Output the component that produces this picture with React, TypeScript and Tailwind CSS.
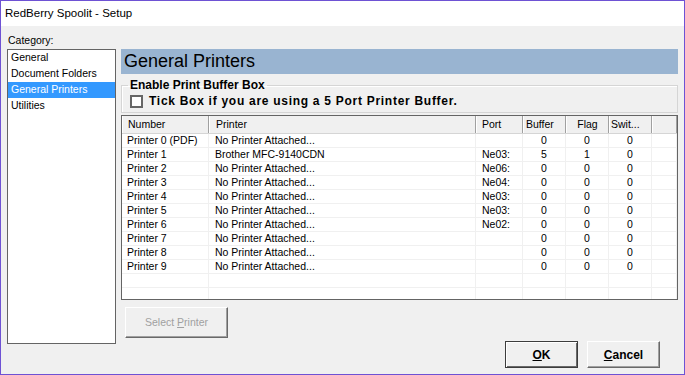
const printers = [
  { num: "Printer 0 (PDF)", name: "No Printer Attached...", port: "", buffer: "0", flag: "0", swit: "0" },
  { num: "Printer 1", name: "Brother MFC-9140CDN", port: "Ne03:", buffer: "5", flag: "1", swit: "0" },
  { num: "Printer 2", name: "No Printer Attached...", port: "Ne06:", buffer: "0", flag: "0", swit: "0" },
  { num: "Printer 3", name: "No Printer Attached...", port: "Ne04:", buffer: "0", flag: "0", swit: "0" },
  { num: "Printer 4", name: "No Printer Attached...", port: "Ne03:", buffer: "0", flag: "0", swit: "0" },
  { num: "Printer 5", name: "No Printer Attached...", port: "Ne03:", buffer: "0", flag: "0", swit: "0" },
  { num: "Printer 6", name: "No Printer Attached...", port: "Ne02:", buffer: "0", flag: "0", swit: "0" },
  { num: "Printer 7", name: "No Printer Attached...", port: "", buffer: "0", flag: "0", swit: "0" },
  { num: "Printer 8", name: "No Printer Attached...", port: "", buffer: "0", flag: "0", swit: "0" },
  { num: "Printer 9", name: "No Printer Attached...", port: "", buffer: "0", flag: "0", swit: "0" },
  { num: "", name: "", port: "", buffer: "", flag: "", swit: "" },
  { num: "", name: "", port: "", buffer: "", flag: "", swit: "" },
];

const categories = ["General", "Document Folders", "General Printers", "Utilities"];

const cols = "grid grid-cols-[87px_267px_47px_43px_43px_43px_1fr]";
const headCell = "h-full border-l border-l-white border-r border-r-[#a0a0a0] leading-[17px] whitespace-nowrap overflow-hidden";
const bodyCell = "h-full border-r border-r-[#f0f0f0] leading-[13px] whitespace-nowrap overflow-hidden";

function PrinterTable() {
  return (
    <div className="mt-[2px] h-[185px] w-full overflow-hidden border border-[#646464] bg-white">
      <div className={`${cols} h-[18px] border-b border-b-[#d5d5d5] bg-[#f0f0f0]`}>
        <div className={`${headCell} pl-[5px]`}>Number</div>
        <div className={`${headCell} pl-[6px]`}>Printer</div>
        <div className={`${headCell} pl-[5px]`}>Port</div>
        <div className={`${headCell} pl-[2px]`}>Buffer</div>
        <div className={`${headCell} text-center`}>Flag</div>
        <div className={`${headCell} pl-[1px]`}>Swit...</div>
        <div className={`${headCell}`}></div>
      </div>
      {printers.map((p, i) => (
        <div key={i} className={`${cols} h-[14px] border-b border-b-[#f0f0f0]`}>
          <div className={`${bodyCell} pl-[5px]`}>{p.num}</div>
          <div className={`${bodyCell} pl-[6px]`}>{p.name}</div>
          <div className={`${bodyCell} pl-[6px]`}>{p.port}</div>
          <div className={`${bodyCell} text-center`}>{p.buffer}</div>
          <div className={`${bodyCell} text-center`}>{p.flag}</div>
          <div className={`${bodyCell} text-center`}>{p.swit}</div>
          <div className={`${bodyCell}`}></div>
        </div>
      ))}
    </div>
  );
}

export default function App() {
  return (
    <div className="flex h-[375px] w-[685px] flex-col border border-[#6e52d4] bg-[#f0f0f0] font-['Liberation_Sans',Arial,sans-serif] text-[10.5px] text-black">
      {/* title bar */}
      <div className="flex h-[25px] shrink-0 items-center bg-white pl-[4px] text-[11.5px]">
        RedBerry Spoolit - Setup
      </div>

      <div className="flex flex-1">
        {/* category list */}
        <div className="ml-[6px] flex w-[109px] flex-col pt-[7px]">
          <div className="h-[14px] pl-[1px] leading-[14px]">Category:</div>
          <div className="mt-[2px] h-[295px] border border-[#646464] bg-white">
            {categories.map((c) => (
              <div
                key={c}
                className={`h-[16px] pl-[3px] leading-[15px] ${c === "General Printers" ? "bg-[#3399ff] text-white" : ""}`}
              >
                {c}
              </div>
            ))}
          </div>
        </div>

        {/* right panel */}
        <div className="ml-[5px] flex w-[557px] flex-col pt-[23px]">
          <div className="flex h-[25px] items-center bg-[#99b4d1] pl-[3px] text-[18px]">General Printers</div>

          <fieldset className="mt-[4px] border border-[#d5d5d5] pb-[4px] shadow-[inset_1px_1px_0_#fff]">
            <legend className="ml-[6px] px-[2px] text-[12px] font-bold leading-[14px]">Enable Print Buffer Box</legend>
            <div className="mt-[3px] flex items-center pl-[8px]">
              <div className="h-[13px] w-[13px] border-2 border-[#666] bg-white"></div>
              <span className="ml-[6px] text-[12px] font-bold leading-[13px] tracking-[0.72px]">
                Tick Box if you are using a 5 Port Printer Buffer.
              </span>
            </div>
          </fieldset>

          <PrinterTable />

          <div className="mt-[7px] pl-[4px]">
            <button className="h-[31px] w-[103px] border border-t-white border-l-white border-b-[#696969] border-r-[#696969] bg-[#f0f0f0] text-[10.5px] text-[#a0a0a0] shadow-[inset_-1px_-1px_0_#a0a0a0]">
              Select <span className="underline">P</span>rinter
            </button>
          </div>

          <div className="mt-[3px] flex justify-end gap-[9px] pr-[18px]">
            <button className="h-[27px] w-[73px] border border-[#3c3c3c] bg-[#f0f0f0] text-[12px] font-bold shadow-[inset_1px_1px_0_#fff,inset_-1px_-1px_0_#696969]">
              <span className="underline">O</span>K
            </button>
            <button className="h-[27px] w-[73px] border border-t-white border-l-white border-b-[#696969] border-r-[#696969] bg-[#f0f0f0] text-[12px] font-bold shadow-[inset_-1px_-1px_0_#a0a0a0]">
              <span className="underline">C</span>ancel
            </button>
          </div>
        </div>
      </div>
    </div>
  );
}
